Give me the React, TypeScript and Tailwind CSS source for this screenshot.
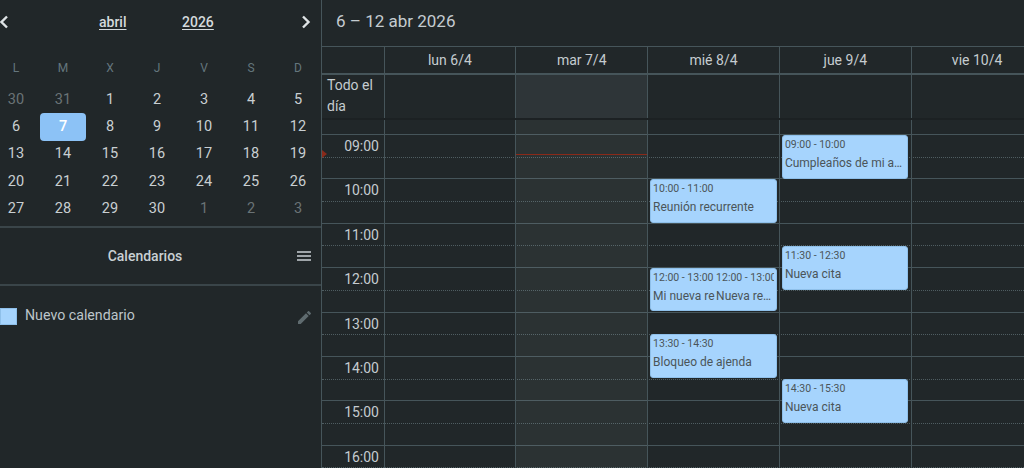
import React from "react";

const weekdays = ["L", "M", "X", "J", "V", "S", "D"];
const weeks = [
  [30, 31, 1, 2, 3, 4, 5],
  [6, 7, 8, 9, 10, 11, 12],
  [13, 14, 15, 16, 17, 18, 19],
  [20, 21, 22, 23, 24, 25, 26],
  [27, 28, 29, 30, 1, 2, 3],
];
const days = ["lun 6/4", "mar 7/4", "mié 8/4", "jue 9/4", "vie 10/4"];
const hours = ["09:00", "10:00", "11:00", "12:00", "13:00", "14:00", "15:00", "16:00"];

function isMuted(week: number, day: number) {
  return (week === 0 && day < 2) || (week === 4 && day > 3);
}

function Chevron({ flip }: { flip?: boolean }) {
  return (
    <svg width="10" height="14" viewBox="0 0 10 14" className={flip ? "rotate-180" : ""}>
      <path d="M8 1.5 2.5 7 8 12.5" fill="none" stroke="#dfe4e6" strokeWidth="2.4" />
    </svg>
  );
}

function EventCard({ top, height, time, title }: { top: number; height: number; time: string; title: string }) {
  return (
    <div
      className="absolute left-[2px] w-[126.5px] rounded-[3px] border border-[#8fc0ea] bg-[#a6d4fd] px-[2px] text-[#4b5559]"
      style={{ top, height }}
    >
      <div className="text-[10.5px] leading-[18px] whitespace-nowrap overflow-hidden">{time}</div>
      <div className="text-[12px] leading-[18px] whitespace-nowrap overflow-hidden">{title}</div>
    </div>
  );
}

export default function App() {
  return (
    <div className="flex h-[468px] w-[1024px] overflow-hidden bg-[#212729] font-['Roboto',sans-serif] text-[#c5ccd0]">
      {/* Sidebar */}
      <aside className="flex w-[321px] shrink-0 flex-col">
        <div className="relative flex h-[44px] items-center justify-between pr-[10px]">
          <span className="-ml-[1px]">
            <Chevron />
          </span>
          <div className="absolute left-[99px] text-[14px] font-medium text-[#d5dadd] underline underline-offset-2">abril</div>
          <div className="absolute left-[182px] text-[14px] font-medium text-[#d5dadd] underline underline-offset-2">2026</div>
          <Chevron flip />
        </div>
        <div className="-ml-[7.5px] grid h-[42px] w-[329px] grid-cols-7 items-center pt-[6px] text-center text-[12px] text-[#64767d]">
          {weekdays.map((d) => (
            <div key={d}>{d}</div>
          ))}
        </div>
        <div className="-ml-[7.5px] grid w-[329px] grid-cols-7 text-center text-[14.5px]">
          {weeks.map((week, w) =>
            week.map((d, i) => {
              const selected = w === 1 && i === 1;
              return (
                <div key={`${w}-${i}`} className="flex h-[27.25px] items-center justify-center">
                  <span
                    className={
                      selected
                        ? "flex h-[28px] w-[46px] items-center justify-center rounded-[4px] bg-[#8cc2f6] font-medium text-white"
                        : isMuted(w, i)
                          ? "text-[#6a7376]"
                          : "text-[#c9cfd2]"
                    }
                  >
                    {d}
                  </span>
                </div>
              );
            }),
          )}
        </div>
        <div className="relative mt-[3.75px] flex h-[60px] items-center justify-center border-y-2 border-[#3a4549] pt-[1px] pr-[31px] text-[14px] font-medium text-[#c9d0d4]">
          <span>Calendarios</span>
          <svg width="14" height="10" viewBox="0 0 14 10" className="absolute right-[10px] top-[23px]">
            <path d="M0 1h14M0 5h14M0 9h14" stroke="#c9d0d4" strokeWidth="1.6" />
          </svg>
        </div>
        <div className="flex h-[60px] items-center pr-[10px]">
          <div className="h-[17px] w-[17px] shrink-0 border border-[#8fc0ea] bg-[#a6d4fd]" />
          <span className="ml-[8px] flex-1 text-[14.2px] text-[#bdc5c9]">Nuevo calendario</span>
          <svg width="13" height="13" viewBox="3 3 18 18" className="mt-[3px]">
            <path
              d="M3 17.25V21h3.75L17.81 9.94l-3.75-3.75L3 17.25zM20.71 7.04a1 1 0 0 0 0-1.41l-2.34-2.34a1 1 0 0 0-1.41 0l-1.83 1.83 3.75 3.75 1.83-1.83z"
              fill="#5f6b6f"
            />
          </svg>
        </div>
      </aside>

      {/* Week view */}
      <main className="flex min-w-0 flex-1 flex-col border-l border-[#46555a]">
        <div className="flex h-[47px] shrink-0 items-center border-b border-[#46555a] pb-[3px] pl-[14px] text-[17px] text-[#c5ccd0]">
          6 – 12 abr 2026
        </div>
        <div className="flex h-[28px] shrink-0 border-b-2 border-[#46555a] text-[14px]">
          <div className="w-[61.5px] shrink-0" />
          {days.map((d) => (
            <div key={d} className="flex w-[131.8px] shrink-0 items-center justify-center border-l border-[#46555a]">
              {d}
            </div>
          ))}
        </div>
        <div className="flex h-[43px] shrink-0 text-[14px]">
          <div className="w-[61.5px] shrink-0 pl-[5px] leading-[21px]">
            Todo el
            <br />
            día
          </div>
          {days.map((d, i) => (
            <div key={d} className={`w-[131.8px] shrink-0 border-l border-[#46555a] ${i === 1 ? "bg-[#2e3538]" : ""}`} />
          ))}
        </div>
        <div className="h-[2px] shrink-0 bg-[#1c2123]" />

        {/* Time grid */}
        <div className="relative flex-1 overflow-hidden">
          <div className="h-[14px]" />
          {hours.map((h) => (
            <div key={h} className="h-[44.4px] border-t border-[#46555a]">
              <div className="h-[22.6px] border-b border-dotted border-[#4f5d61] pt-[1px] text-[14px]">
                <div className="w-[57px] text-right leading-[20px]">{h}</div>
              </div>
            </div>
          ))}

          {/* columns over the rows */}
          <div className="absolute inset-0 left-[61.5px] flex">
            {days.map((d, i) => (
              <div key={d} className={`relative w-[131.8px] shrink-0 border-l border-[#46555a] ${i === 1 ? "bg-[#eef6fa]/[0.05]" : ""}`}>
                {i === 1 && <div className="absolute left-0 right-0 top-[34px] h-[1px] bg-[#8a2a1a]" />}
                {i === 2 && (
                  <>
                    <EventCard top={59} height={44} time="10:00 - 11:00" title="Reunión recurrente" />
                    <div className="absolute left-[2px] top-[148px] flex h-[43px] w-[126.5px] overflow-hidden rounded-[3px] border border-[#8fc0ea] bg-[#a6d4fd] pl-[2px] text-[#4b5559]">
                      <div className="w-[63px] shrink-0 overflow-hidden whitespace-nowrap">
                        <div className="text-[10.5px] leading-[18px]">12:00 - 13:00</div>
                        <div className="text-[12px] leading-[18px]">Mi nueva re</div>
                      </div>
                      <div className="w-[58px] shrink-0 overflow-hidden whitespace-nowrap">
                        <div className="text-[10.5px] leading-[18px]">12:00 - 13:00</div>
                        <div className="text-[12px] leading-[18px]">Nueva re…</div>
                      </div>
                    </div>
                    <EventCard top={214} height={44} time="13:30 - 14:30" title="Bloqueo de ajenda" />
                  </>
                )}
                {i === 3 && (
                  <>
                    <EventCard top={15} height={44} time="09:00 - 10:00" title="Cumpleaños de mi a…" />
                    <EventCard top={126} height={44} time="11:30 - 12:30" title="Nueva cita" />
                    <EventCard top={259} height={44} time="14:30 - 15:30" title="Nueva cita" />
                  </>
                )}
              </div>
            ))}
          </div>

          {/* now marker */}
          <div className="absolute left-0 top-[30px] h-0 w-0 border-y-[4px] border-l-[5px] border-y-transparent border-l-[#8a2a1a]" />
        </div>
      </main>
    </div>
  );
}
